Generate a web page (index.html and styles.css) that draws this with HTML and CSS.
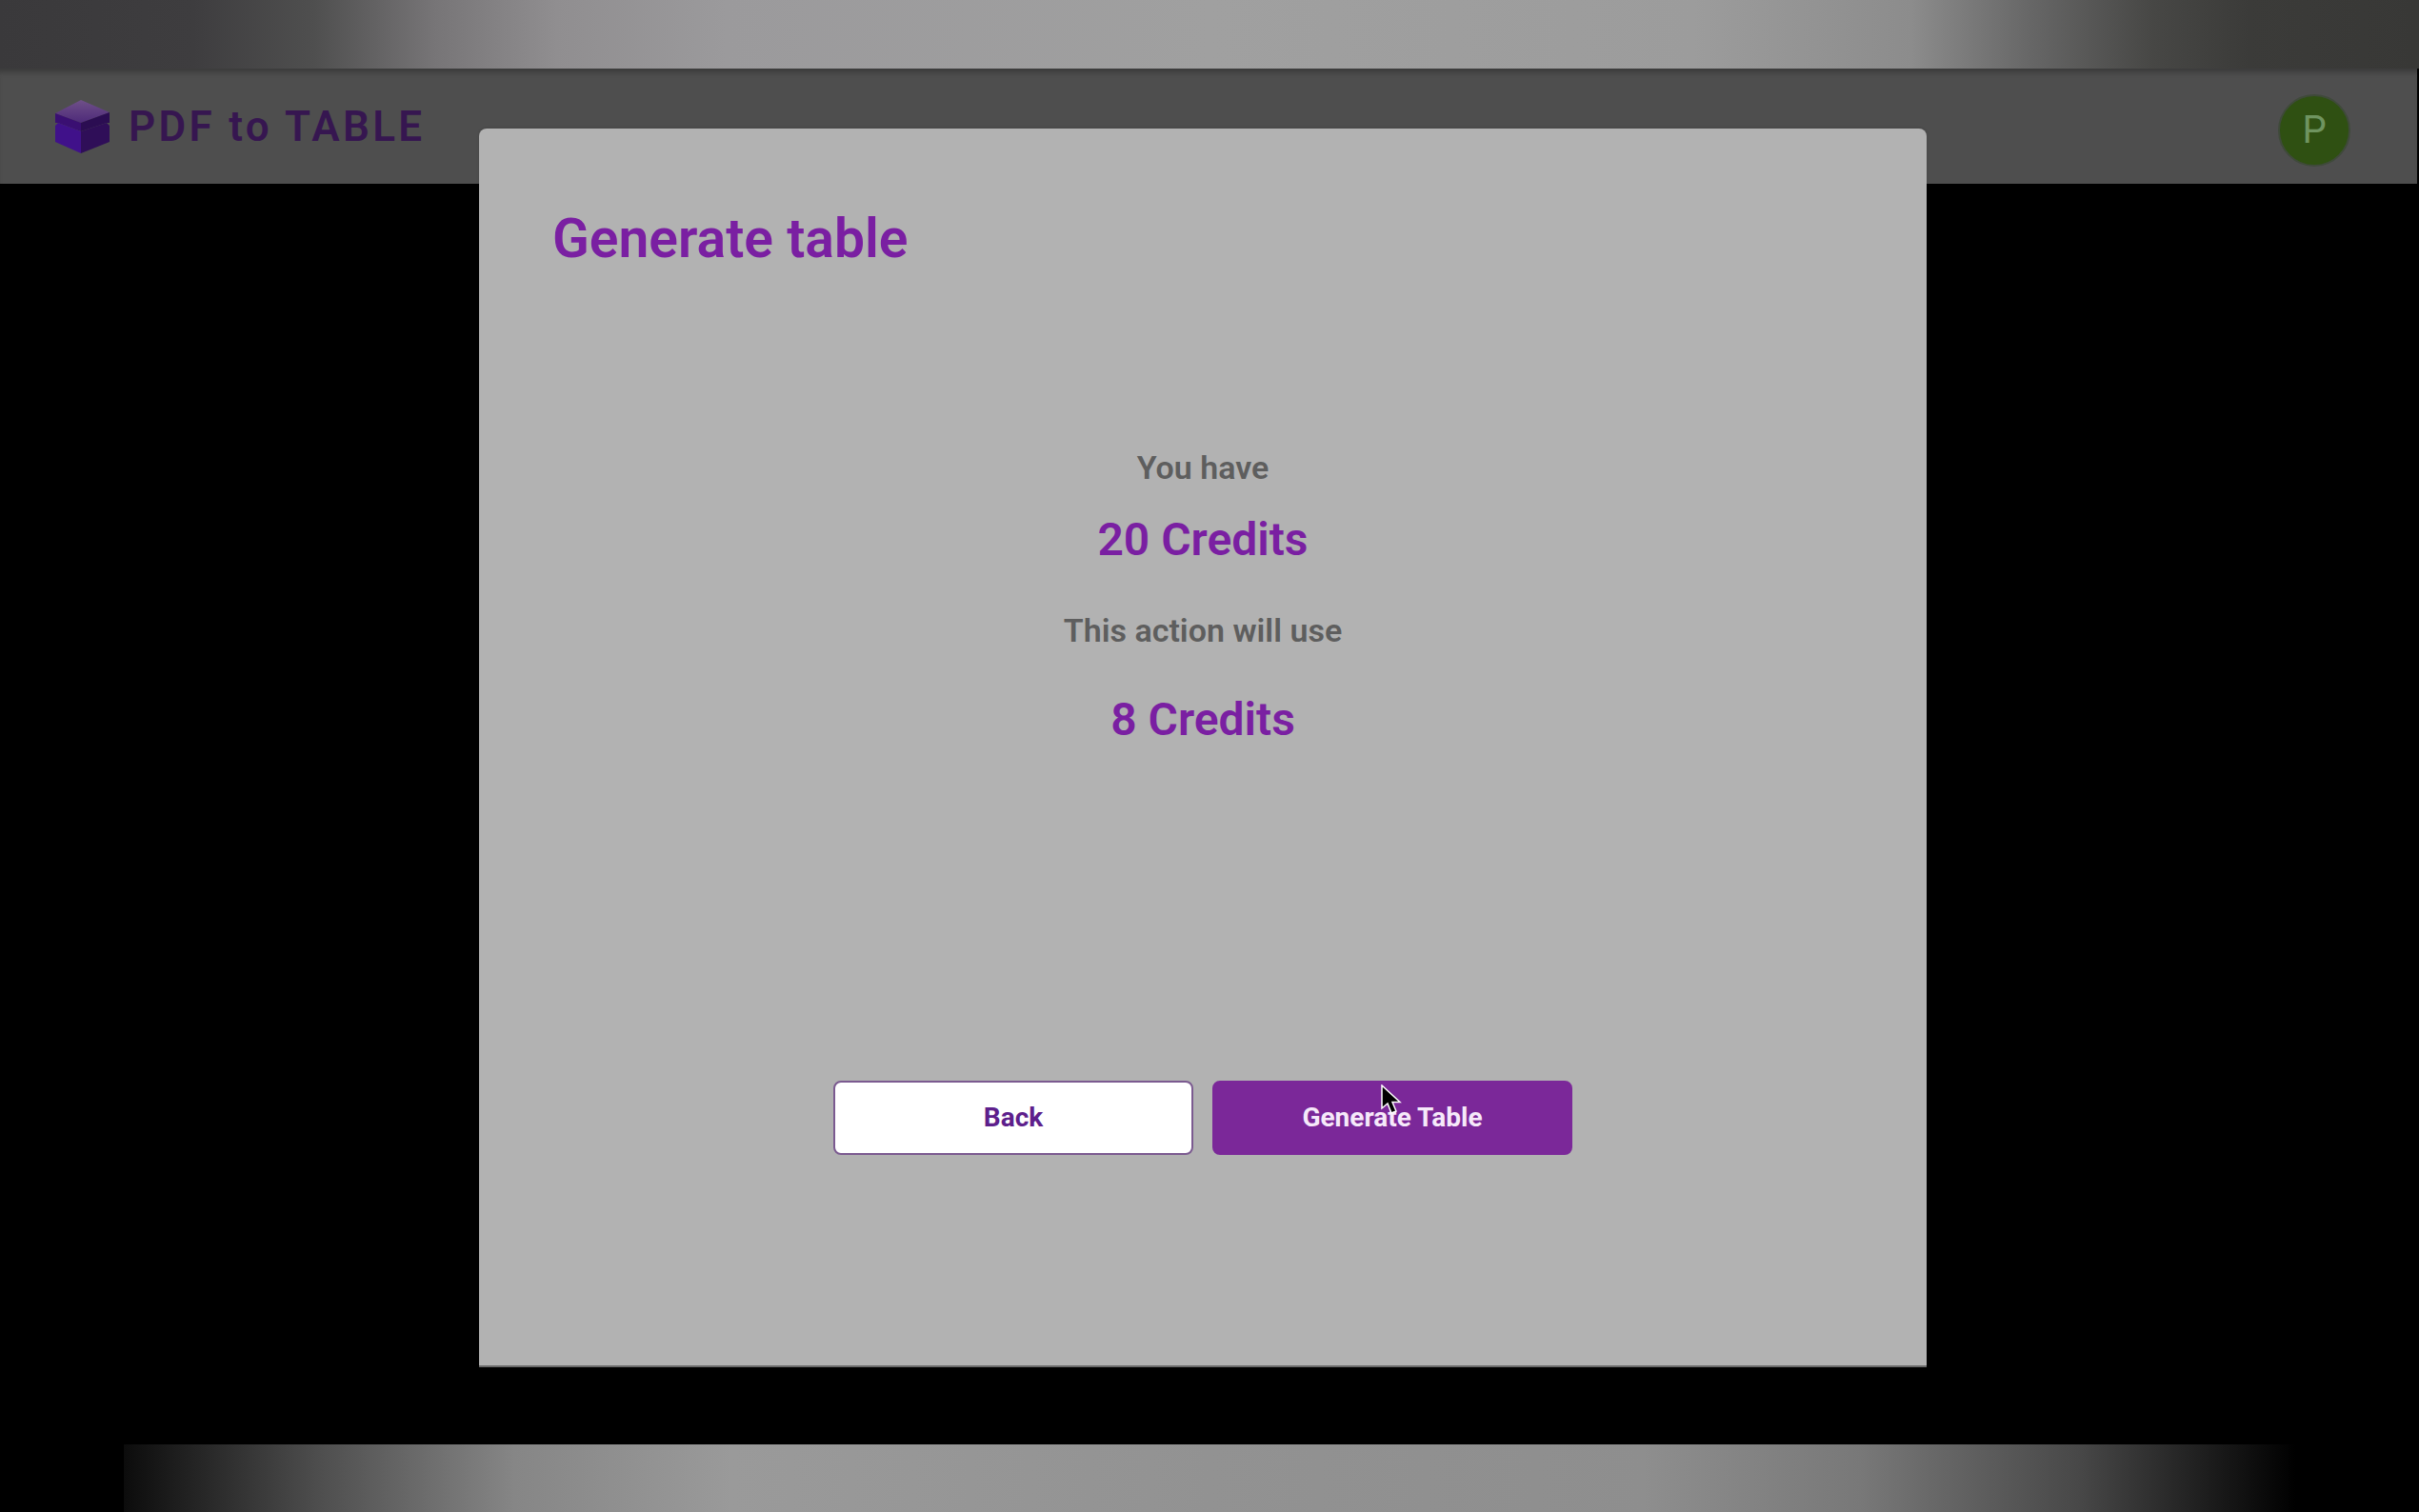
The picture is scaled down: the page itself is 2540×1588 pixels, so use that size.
FILE: index.html
```html
<!DOCTYPE html>
<html lang="en">
<head>
  <meta charset="UTF-8">
  <title>PDF to TABLE</title>
  <link rel="stylesheet" href="styles.css">
</head>
<body>
  <div class="strip-top"></div>
  <header class="app-bar">
    <div class="brand">
      <svg class="brand-logo" viewBox="0 0 57 56" width="57" height="56">
        <defs>
          <linearGradient id="lid" x1="0" y1="0" x2="0" y2="1">
            <stop offset="0" stop-color="#6f5088"/>
            <stop offset="1" stop-color="#4e2a7a"/>
          </linearGradient>
        </defs>
        <path d="M0 14 L27 0 L57 13 L27 24 Z" fill="url(#lid)"/>
        <path d="M0 14 L27 24 L27 33 L3 24 L0 24 Z" fill="#3a0f72"/>
        <path d="M57 13 L27 24 L27 33 L54 24 L57 24 Z" fill="#2b0d52"/>
        <path d="M3 24 L27 33 L27 56 L0 44 L0 27 Z" fill="#40118a"/>
        <path d="M54 24 L27 33 L27 56 L57 44 L57 27 Z" fill="#2f0e58"/>
      </svg>
      <span class="brand-name">PDF to TABLE</span>
    </div>
    <div class="avatar">P</div>
  </header>
  <main class="backdrop"></main>
  <div class="strip-bottom"></div>

  <section class="modal">
    <h2 class="modal-title">Generate table</h2>
    <div class="credits">
      <p class="credits-label">You have</p>
      <p class="credits-value">20 Credits</p>
      <p class="credits-label">This action will use</p>
      <p class="credits-value credits-value-use">8 Credits</p>
    </div>
    <div class="modal-actions">
      <button class="btn btn-outline" type="button">Back</button>
      <button class="btn btn-solid" type="button">Generate Table</button>
    </div>
  </section>

  <svg class="cursor" viewBox="0 0 22 32" width="22" height="32">
    <path d="M1 1 L1 25 L7 20 L11 30 L16 28 L12 18.5 L20 18.5 Z" fill="#000" stroke="#fff" stroke-width="1.5"/>
  </svg>
</body>
</html>
```

FILE: styles.css
```css
* {
  box-sizing: border-box;
}

html,
body {
  height: 100%;
}

body {
  font-family: Roboto, "Liberation Sans", sans-serif;
  display: flex;
  flex-direction: column;
  height: 1588px;
  margin: 0;
  background: #000;
  overflow: hidden;
}

.strip-top {
  height: 72px;
  background: linear-gradient(to right, #3a393b 0%, #3e3d3f 8%, #4f4f4f 13%, #777577 18%, #908e90 23%, #9b9a9c 30%, #a0a0a0 50%, #9c9c9c 70%, #8c8c8c 79%, #666 84%, #474745 89%, #3b3b39 93%, #383836 100%);
}

.app-bar {
  display: flex;
  align-items: center;
  justify-content: space-between;
  height: 121px;
  margin-right: 2px;
  padding: 0 70px 0 58px;
  background: #4e4e4e;
  box-shadow: inset 0 7px 5px -3px #3c3c3c;
}

.brand {
  display: flex;
  align-items: center;
  gap: 20px;
}

.brand-logo {
  display: block;
}

.brand-name {
  font-size: 44px;
  font-weight: 600;
  letter-spacing: 3.3px;
  color: #361650;
}

.avatar {
  display: flex;
  align-items: center;
  justify-content: center;
  width: 76px;
  height: 76px;
  margin-top: 8px;
  border: 2px solid #3f4a3a;
  border-radius: 50%;
  background: #2f5012;
  color: #6f9460;
  font-size: 40px;
}

.backdrop {
  flex: 1;
}

.strip-bottom {
  height: 71px;
  margin: 0 130px;
  background: linear-gradient(to right, #0c0c0c 0%, #4e4e4e 9%, #868686 18%, #9a9a9a 28%, #929292 50%, #8e8e8e 70%, #787878 80%, #484848 90%, #000 100%);
}

.modal {
  position: absolute;
  top: 135px;
  left: 503px;
  width: 1520px;
  height: 1301px;
  padding: 84px 77px 0;
  border-bottom: 2px solid #6a6a6a;
  border-radius: 8px 8px 0 0;
  background: #b2b2b2;
  box-shadow: 0 -1px 3px rgba(0, 0, 0, 0.1);
}

.modal-title {
  margin: 0;
  font-size: 57px;
  line-height: 64px;
  font-weight: 600;
  color: #7a1fa2;
}

.credits {
  margin-top: 189px;
  text-align: center;
}

.credits-label {
  margin: 0;
  font-size: 34px;
  line-height: 38px;
  font-weight: 600;
  color: #5e5e5e;
}

.credits-value {
  margin: 30px 0 49px;
  font-size: 48px;
  line-height: 54px;
  font-weight: 600;
  color: #7a1fa2;
}

.credits-value-use {
  margin-top: 48px;
}

.modal-actions {
  display: flex;
  justify-content: center;
  gap: 20px;
  margin-top: 352px;
}

.btn {
  width: 378px;
  height: 78px;
  padding-bottom: 3px;
  border: 2px solid #7b2899;
  border-radius: 8px;
  font-family: inherit;
  font-size: 28px;
  font-weight: 700;
  cursor: pointer;
}

.btn-outline {
  border-color: #7b5a90;
  background: #fff;
  color: #5e1f8c;
}

.btn-solid {
  background: #7b2899;
  color: #f6e9fa;
}

.cursor {
  position: absolute;
  top: 1139px;
  left: 1450px;
}
```
